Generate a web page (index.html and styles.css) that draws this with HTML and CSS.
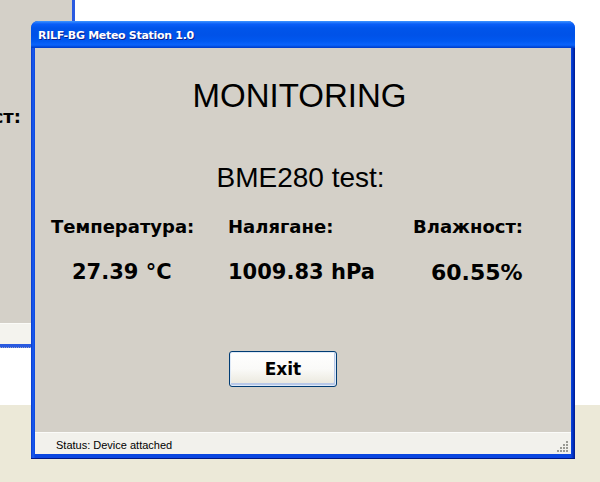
FILE: index.html
```html
<!DOCTYPE html>
<html>
<head>
<meta charset="utf-8">
<link rel="stylesheet" href="styles.css">
</head>
<body>
<div class="desk">
  <div class="desk-white"></div>
  <div class="win-back">
    <div class="back-client">
      <span class="back-label">Влажност:</span>
    </div>
    <div class="back-status"></div>
  </div>
  <div class="win">
    <div class="titlebar"><span class="title">RILF-BG Meteo Station 1.0</span></div>
    <div class="frame">
      <div class="client">
        <div class="heading">MONITORING</div>
        <div class="subheading">BME280 test:</div>
        <div class="readings">
          <div class="label">Температура:</div>
          <div class="label">Налягане:</div>
          <div class="label">Влажност:</div>
          <div class="value v1">27.39 °C</div>
          <div class="value v2">1009.83 hPa</div>
          <div class="value v3">60.55%</div>
        </div>
        <button class="btn">Exit</button>
      </div>
      <div class="statusbar">
        <span class="status-text">Status: Device attached</span>
        <svg class="grip" width="12" height="12" viewBox="0 0 12 12">
          <g fill="#9a9a94">
            <rect x="9" y="1" width="2" height="2"/>
            <rect x="6" y="4" width="2" height="2"/>
            <rect x="9" y="4" width="2" height="2"/>
            <rect x="3" y="7" width="2" height="2"/>
            <rect x="6" y="7" width="2" height="2"/>
            <rect x="9" y="7" width="2" height="2"/>
            <rect x="0" y="10" width="2" height="2"/>
            <rect x="3" y="10" width="2" height="2"/>
            <rect x="6" y="10" width="2" height="2"/>
            <rect x="9" y="10" width="2" height="2"/>
          </g>
        </svg>
      </div>
    </div>
  </div>
</div>
</body>
</html>
```

FILE: styles.css
```css
* { box-sizing: border-box; }
html, body { margin: 0; padding: 0; }
body {
  width: 600px;
  height: 482px;
  overflow: hidden;
  background: #ece9d8;
}
.desk {
  position: relative;
  width: 600px;
  height: 482px;
}
.desk-white {
  height: 405px;
  background: #ffffff;
}

/* background window (partly hidden) */
.win-back {
  position: absolute;
  left: -300px;
  top: -20px;
  width: 375px;
  height: 368px;
  background: #2a5ae0;
  padding: 0 3px 3px 0;
  display: flex;
  flex-direction: column;
  border-bottom: 1px dotted #9aa6c8;
}
.back-client {
  position: relative;
  flex: 1;
  background: #d4d0c8;
}
.back-label {
  position: absolute;
  right: 51px;
  top: 128px;
  font: bold 18px/18px "DejaVu Sans", sans-serif;
  color: #000;
}
.back-status {
  height: 21px;
  background: #f4f3ee;
  border-top: 1px solid #fbfbf8;
}

/* main window */
.win {
  position: absolute;
  left: 31px;
  top: 21px;
  width: 544px;
  height: 438px;
  display: flex;
  flex-direction: column;
  border-radius: 7px 7px 0 0;
  overflow: hidden;
  background: #0a3fd6;
}
.titlebar {
  height: 27px;
  flex: none;
  background: linear-gradient(to bottom,
    #3d95ff 0px, #0a5ef8 3px, #0055ea 7px, #0052e8 14px,
    #0058f0 20px, #0b63fb 24px, #0047d6 26px, #0039c8 27px);
  display: flex;
  align-items: center;
  padding: 2px 0 0 7px;
}
.title {
  font: bold 11px/14px "DejaVu Sans", sans-serif;
  letter-spacing: -0.3px;
  color: #ffffff;
  text-shadow: 1px 1px 0 #0a1e8c;
}
.frame {
  flex: 1;
  display: flex;
  flex-direction: column;
  padding: 0 4px 4px 4px;
  background: linear-gradient(to right, #0838c8 0, #1a5cf0 2px, #0a46e0 4px, #0a46e0 calc(100% - 4px), #0030c0 calc(100% - 2px), #001a8c 100%);
  border-bottom: 1px solid #001784;
}
.client {
  flex: 1;
  background: #d4d0c8;
  display: flex;
  flex-direction: column;
  align-items: flex-start;
  padding-top: 31px;
}
.heading {
  align-self: center;
  margin-left: -7px;
  font: 33px/33px "Liberation Sans", Arial, sans-serif;
  color: #000;
}
.subheading {
  align-self: center;
  margin-left: -5px;
  margin-top: 52px;
  font: 28px/28px "Liberation Sans", Arial, sans-serif;
  color: #000;
}
.readings {
  margin-top: 26px;
  padding-left: 16px;
  display: grid;
  grid-template-columns: 177px 185px auto;
  row-gap: 26px;
  color: #000;
}
.label {
  font: bold 18px/18px "DejaVu Sans", sans-serif;
}
.value {
  font: bold 21px/21px "DejaVu Sans", sans-serif;
}
.v1 { padding-left: 21px; }
.v3 { padding-left: 18px; font-size: 22px; }
.btn {
  margin-top: 68px;
  margin-left: 194px;
  width: 108px;
  height: 36px;
  border: 1px solid #003c74;
  border-radius: 3px;
  background: linear-gradient(to bottom, #ffffff 0%, #fafaf8 50%, #eceae0 90%, #d8d6cc 100%);
  box-shadow: inset 0 0 0 1px #dfeaf8, inset -1px -2px 0 1px #b8c8e8;
  font: bold 17px/17px "DejaVu Sans", sans-serif;
  color: #000;
  padding: 0;
}
.statusbar {
  height: 22px;
  flex: none;
  background: #f2f1ec;
  border-top: 1px solid #fbfbf9;
  display: flex;
  align-items: center;
  justify-content: space-between;
  padding: 3px 2px 0 21px;
}
.status-text {
  font: 11px/13px "Liberation Sans", Arial, sans-serif;
  color: #000;
}
.grip {
  align-self: flex-end;
  margin-bottom: 2px;
}
```
